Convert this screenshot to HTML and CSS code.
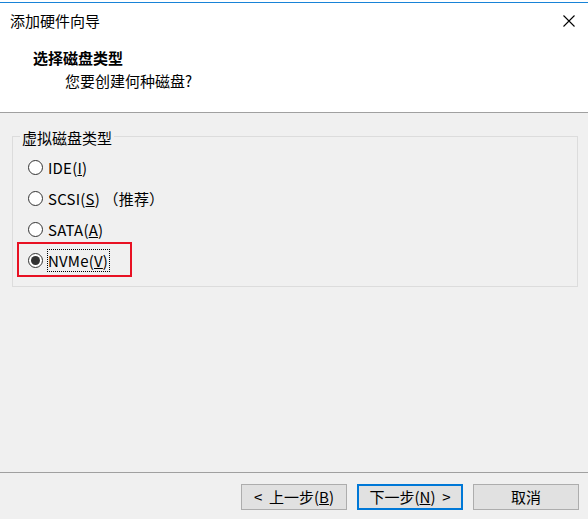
FILE: index.html
```html
<!DOCTYPE html>
<html lang="zh-CN">
<head>
<meta charset="utf-8">
<title>添加硬件向导</title>
<link rel="stylesheet" href="styles.css">
</head>
<body>
<div class="strip"></div>
<header class="header">
  <div class="titlebar">
    <span class="title">添加硬件向导</span>
    <svg class="close" width="12" height="12" viewBox="0 0 12 12"><path d="M0.5 0.5 L11.5 11.5 M11.5 0.5 L0.5 11.5" stroke="#000" stroke-width="1.1" fill="none"/></svg>
  </div>
  <div class="heading">选择磁盘类型</div>
  <div class="subtitle">您要创建何种磁盘?</div>
</header>
<main class="main">
  <div class="group">
    <span class="legend">虚拟磁盘类型</span>
    <div class="row"><span class="radio"></span><span class="label">IDE(<u>I</u>)</span></div>
    <div class="row"><span class="radio"></span><span class="label">SCSI(<u>S</u>) （推荐）</span></div>
    <div class="row"><span class="radio"></span><span class="label">SATA(<u>A</u>)</span></div>
    <div class="row"><span class="radio checked"></span><span class="label focus">NVMe(<u>V</u>)</span></div>
    <div class="highlight"></div>
  </div>
</main>
<footer class="footer">
  <button class="btn">&lt;&nbsp; 上一步(<u>B</u>)</button>
  <button class="btn default">下一步(<u>N</u>)&nbsp; &gt;</button>
  <button class="btn">取消</button>
</footer>
</body>
</html>
```
FILE: styles.css
```css
* { box-sizing: border-box; }
html, body { margin: 0; padding: 0; }
body {
  width: 588px;
  height: 519px;
  overflow: hidden;
  background: #f0f0f0;
  font-family: "Noto Sans CJK SC", "Noto Sans", sans-serif;
  font-size: 15px;
  color: #000;
  display: flex;
  flex-direction: column;
}
.strip {
  height: 3px;
  background: #fff;
  border-bottom: 1px solid #1883d7;
}
.header {
  background: #fff;
  height: 110px;
  border-bottom: 1px solid #a0a0a0;
  padding-top: 8px;
}
.titlebar {
  display: flex;
  justify-content: space-between;
  align-items: center;
  height: 20px;
  line-height: 20px;
  padding: 0 13px 0 10px;
}
.close { display: block; }
.heading {
  margin-top: 17px;
  line-height: 20px;
  padding-left: 33px;
  font-weight: bold;
}
.subtitle {
  margin-top: 3px;
  line-height: 20px;
  padding-left: 65px;
}
.main { flex: 1; padding-top: 23px; }
.group {
  position: relative;
  margin: 0 10px 0 12px;
  height: 151px;
  border: 1px solid #dcdcdc;
  padding: 15px 0 0 15px;
}
.legend {
  position: absolute;
  top: -9px;
  left: 7px;
  padding: 0 2px;
  line-height: 20px;
  background: #f0f0f0;
}
.row {
  display: flex;
  align-items: center;
  height: 31px;
  gap: 5px;
}
.radio {
  width: 15px;
  height: 15px;
  border-radius: 50%;
  border: 1.4px solid #333;
  background: #fff;
  position: relative;
  flex: none;
}
.radio.checked::after {
  content: "";
  position: absolute;
  left: 1.6px;
  top: 1.6px;
  width: 9px;
  height: 9px;
  border-radius: 50%;
  background: #333;
}
.label { line-height: 21px; letter-spacing: 0.2px; }
.label.focus {
  border: 1px dotted #000;
  margin-left: -1px;
  padding: 0 1px 0 0;
}
.highlight {
  position: absolute;
  left: 4px;
  top: 105px;
  width: 115px;
  height: 35px;
  border: 2px solid #e81123;
}
.footer {
  height: 47px;
  border-top: 1px solid #a0a0a0;
  display: flex;
  justify-content: flex-end;
  align-items: flex-start;
  gap: 10px;
  padding: 11px 9px 0 0;
}
.btn {
  width: 106px;
  height: 26px;
  background: #e1e1e1;
  border: 1px solid #adadad;
  font-family: inherit;
  font-size: 15px;
  color: #000;
  padding: 0;
  line-height: 22px;
}
.btn.default { border: 2px solid #0078d7; }
```
